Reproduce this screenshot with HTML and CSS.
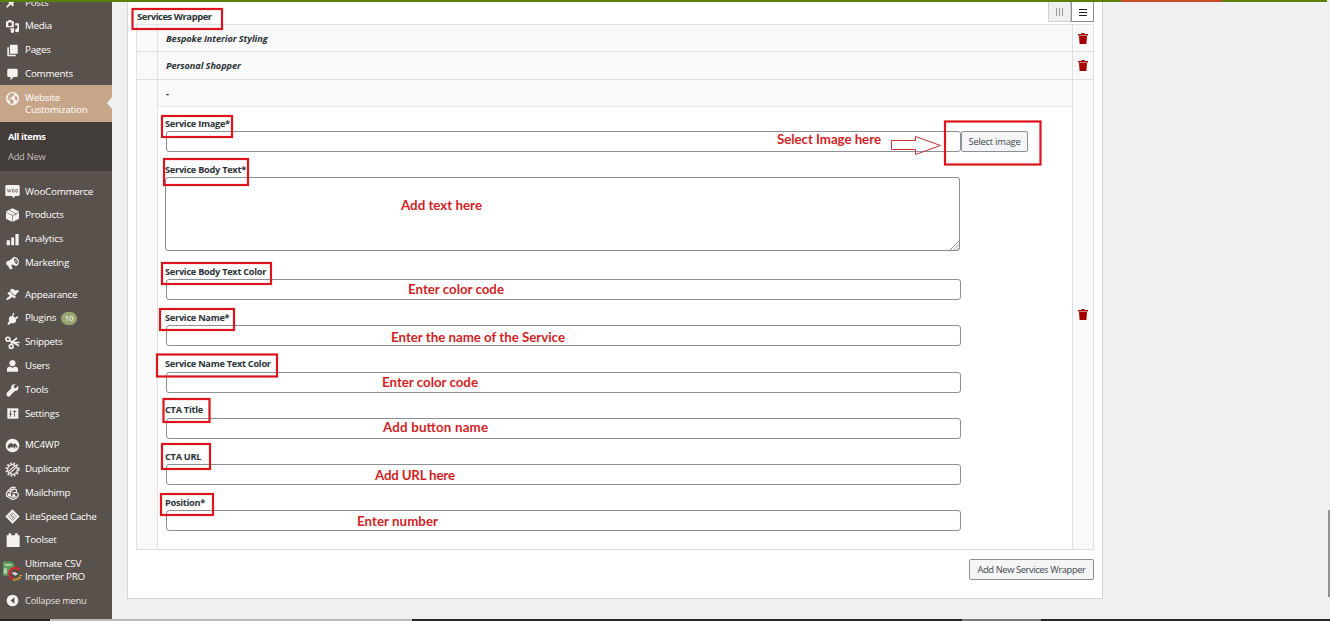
FILE: index.html
```html
<!DOCTYPE html>
<html lang="en">
<head>
<meta charset="utf-8">
<title>Website Customization</title>
<link rel="stylesheet" href="styles.css">
</head>
<body>
<div class="topline"></div>
<div class="shell">
<nav class="sidebar">
  <div class="item"><svg class="ic" viewBox="0 0 20 20"><path d="M18 2l-1 8-3-2-3 3 1 4-2 1-3-3-5 5-2-1 5-6-3-3 1-2 4 1 3-3-2-3z"/></svg><span>Posts</span></div>
  <div class="item"><svg class="ic" viewBox="0 0 20 20"><path fill-rule="evenodd" d="M0 2h3l1-2h4l1 2h3v9H0zM6 3.500a3 3 0 1 0 .1 0zM14 5h6v11a3 3 0 1 1-2.500-3V8H14zM6 12.500h6.500V17a2.700 2.700 0 1 1-2.500-2.500H6z"/></svg><span>Media</span></div>
  <div class="item"><svg class="ic" viewBox="0 0 20 20"><path d="M6 1h12v14H6zM2 5h2.500v11.500H15V19H2z"/></svg><span>Pages</span></div>
  <div class="item"><svg class="ic" viewBox="0 0 20 20"><path d="M4 1h12q2 0 2 2v9q0 2-2 2h-4l-5 5v-5H4q-2 0-2-2V3q0-2 2-2z"/></svg><span>Comments</span></div>
  <div class="item current"><svg class="ic" viewBox="0 0 20 20"><path fill-rule="evenodd" d="M10 0a10 10 0 1 0 .1 0zM8 2l4 0 1 3-3 1-1 3-3 0-1 2 4 0 3 3-1 3-2 2-2-1-1-4-4-4 2-5zM14 6l3 1 1 4-2 3-2-3-1-3z"/></svg><span>Website<br>Customization</span></div>
  <div class="submenu"><div class="sel">All items</div><div>Add New</div></div>
  <div class="item gap"><svg class="ic" viewBox="0 0 20 20"><path d="M1 0h18q2 0 2 2v13q0 2-2 2h-5l-2 3-3-3H1q-2 0-2-2V2q0-2 2-2z"/><path class="line thin" d="M2 6l1.500 5L5 7l1.500 4L8 6M10 7h2.500v4H10zM15 7h2.500v4H15z"/></svg><span>WooCommerce</span></div>
  <div class="item"><svg class="ic" viewBox="0 0 20 20"><path d="M10-1l10 5v11l-10 5-10-5V4z"/><path class="line thin" d="M0 5l10 5 10-5M10 10v10M5 2l10 5v3"/></svg><span>Products</span></div>
  <div class="item"><svg class="ic" viewBox="0 0 20 20"><path d="M1 11h5v8H1zM8 7h4.500v12H8zM14.500 1.500h5V19h-5z"/></svg><span>Analytics</span></div>
  <div class="item"><svg class="ic" viewBox="0 0 20 20"><path fill-rule="evenodd" d="M12 0q7 0 8 7-1 7-5 7l-4-2-3 0 2 6-4 1-3-6q-3 0-3-4 1-3 6-4zM13 2q-2 5 3 9 3-1 2-5-2-4-5-4zM14 5q3 0 2 4-2-1-2-4z"/></svg><span>Marketing</span></div>
  <div class="item gap"><svg class="ic" viewBox="0 0 20 20"><path d="M7 2l3-1 4 3 5-1 1 2-6 6 1 3-2 2-3-2-8 5-2-2 6-5-4-4 2-2 2 0z"/><path class="line" d="M6 5l7 7"/></svg><span>Appearance</span></div>
  <div class="item"><svg class="ic" viewBox="0 0 20 20"><path d="M11 1l2 1-2 4 3 3 4-3 1 2-4 4 1 2q-3 5-8 3l-4 3-2-2 3-4q-2-5 2-8l2 1z"/></svg><span>Plugins</span><b class="count">10</b></div>
  <div class="item"><svg class="ic" viewBox="0 0 20 20"><g class="stroke"><circle cx="3" cy="5" r="3"/><circle cx="8" cy="16" r="3"/><path d="M5 7l6 3h10M8 13l2-4 7-6M11 10l9 5"/></g></svg><span>Snippets</span></div>
  <div class="item"><svg class="ic" viewBox="0 0 20 20"><path d="M10 0a4.800 4.800 0 1 1-.1 0zM1.500 18v-4q0-3 4-4l4.500 2 4.500-2q4 1 4 4v4z"/></svg><span>Users</span></div>
  <div class="item"><svg class="ic" viewBox="0 0 20 20"><path d="M18 3l-3 3.500-3-1 0-3L15 1q-5-2-7 3v3l-7 7q-1 3 1 5 2 1 4 0l7-8q7 0 6-7z"/></svg><span>Tools</span></div>
  <div class="item"><svg class="ic" viewBox="0 0 20 20"><path d="M2 2h17v16H2z"/><path class="line" d="M7 5v10M5 11h4M13 5v10M11 7h5"/></svg><span>Settings</span></div>
  <div class="item gap"><svg class="ic" viewBox="0 0 20 20"><circle cx="10" cy="10" r="10.500"/><path class="dark" d="M2 12l3-5 4-1 2 3 2-3 4 4 1 4-2-1-2-2 0 4-2-1-1-3-2 3-2-2-2 3z"/></svg><span>MC4WP</span></div>
  <div class="item"><svg class="ic" viewBox="0 0 20 20"><circle class="stroke teeth" cx="10" cy="10" r="9.500"/><circle class="stroke thin" cx="10" cy="10" r="7.500"/><path class="stroke thin" d="M4 13L14 4M6 16L16 6"/></svg><span>Duplicator</span></div>
  <div class="item"><svg class="ic" viewBox="0 0 20 20"><path class="stroke thin" d="M15 1Q9-2 4 5q-5 5-3 9l4 2q4 5 9 2 5-2 5-7l-3-3 0-4-4-1-4 3-2 5 2 4q4 2 8-1M4 8l6-5M10 9l6-1"/><circle cx="5" cy="12" r="2.500"/><circle cx="12" cy="13" r="2.200"/></svg><span>Mailchimp</span></div>
  <div class="item"><svg class="ic" viewBox="0 0 20 20"><path d="M10-1l11 11-11 11L-1 10z"/><path class="line thin" d="M10 4l6 6-6 6-6-6zM10 6l-2 4h4l-2 4"/></svg><span>LiteSpeed Cache</span></div>
  <div class="item"><svg class="ic" viewBox="0 0 20 20"><path d="M1 2h3v-3h4v3h6v-3h4v3h3v18H1z"/></svg><span>Toolset</span></div>
  <div class="item two"><svg class="ic csv" viewBox="0 0 20 20"><path fill="#5b9a5c" d="M0 0h9l3 3v12H0z"/><path fill="#b8d1ac" d="M2 2.500h7v2H2zM1 7h3v6H1z"/><circle cx="12.500" cy="13" r="6" fill="#554d49"/><path fill="none" stroke="#d12c32" stroke-width="2.400" d="M18 9q-4-4-9-1-4 4-1 9 1 1 3 2"/><path fill="none" stroke="#e3a62f" stroke-width="2.300" stroke-dasharray="2 1" d="M11 19q6 1 8-5"/><path fill="#ddd" d="M9 12l3-1 4 2-3 2z"/></svg><span>Ultimate CSV<br>Importer PRO</span></div>
  <div class="item collapse"><svg class="ic" viewBox="0 0 20 20"><circle cx="10" cy="10" r="9"/><path class="dark" d="M13 5v10l-6-5z"/></svg><span>Collapse menu</span></div>
</nav>
<main class="content">
  <section class="panel">
    <header class="head"><h2>Services Wrapper</h2>
      <div class="views"><span class="view off"><i></i><i></i><i></i></span><span class="view on"><i></i><i></i><i></i></span></div>
    </header>
    <div class="rows">
      <div class="row"><div class="grip"></div><div class="title">Bespoke Interior Styling</div><div class="del"><svg viewBox="0 0 10 12"><path d="M0 1h3l1-1h2l1 1h3v1.500H0zM1 3h8l-.6 8H1.600z"/></svg></div></div>
      <div class="row"><div class="grip"></div><div class="title">Personal Shopper</div><div class="del"><svg viewBox="0 0 10 12"><path d="M0 1h3l1-1h2l1 1h3v1.500H0zM1 3h8l-.6 8H1.600z"/></svg></div></div>
      <div class="row open"><div class="grip"></div>
        <div class="body"><div class="title">-</div>
          <div class="fields">
            <div class="field"><label>Service Image*</label><div class="pick"><div class="input"></div><span class="btn">Select image</span></div></div>
            <div class="field area"><label>Service Body Text*</label><div class="input"><svg class="resize" viewBox="0 0 10 10"><path d="M0 10L10 0M4 10l6-6M7.500 10L10 7.500"/></svg></div></div>
            <div class="field"><label>Service Body Text Color</label><div class="input"></div></div>
            <div class="field"><label>Service Name*</label><div class="input"></div></div>
            <div class="field"><label>Service Name Text Color</label><div class="input"></div></div>
            <div class="field"><label>CTA Title</label><div class="input"></div></div>
            <div class="field"><label>CTA URL</label><div class="input"></div></div>
            <div class="field"><label>Position*</label><div class="input"></div></div>
          </div>
        </div>
        <div class="del"><svg viewBox="0 0 10 12"><path d="M0 1h3l1-1h2l1 1h3v1.500H0zM1 3h8l-.6 8H1.600z"/></svg></div></div>
    </div>
    <footer class="foot"><span class="btn add">Add New Services Wrapper</span></footer>
  </section>
</main>
</div>
<svg class="marks" viewBox="0 0 1330 621">
  <g class="boxes">
    <rect x="132.500" y="9" width="89.500" height="20"/><rect x="162" y="116" width="70" height="21"/><rect x="164" y="159" width="84" height="26"/><rect x="162" y="263" width="109" height="21"/><rect x="160" y="309" width="74" height="21"/><rect x="157" y="354.500" width="120" height="22"/><rect x="163.500" y="399" width="46" height="23"/><rect x="162" y="444" width="48" height="25"/><rect x="161" y="494" width="52" height="21"/><rect x="945" y="121.500" width="95.500" height="43"/>
  </g>
  <path class="arrow" d="M891.500 140.500h24v-4l25 9-25 9v-5h-24z"/>
  <g class="notes">
    <text x="777" y="144" textLength="104">Select Image here</text><text x="401" y="210" textLength="81">Add text here</text><text x="408" y="294" textLength="96">Enter color code</text><text x="391" y="342" textLength="174">Enter the name of the Service</text><text x="382" y="387" textLength="96">Enter color code</text><text x="383" y="432" textLength="105">Add button name</text><text x="375" y="479.500" textLength="80">Add URL here</text><text x="357" y="526" textLength="81">Enter number</text>
  </g>
</svg>
<div class="thumb"></div>
<div class="taskbar"><i></i><b></b></div>
</body>
</html>
```
FILE: styles.css
```css
* { box-sizing: border-box; }
body { margin: 0; width: 1330px; height: 621px; overflow: hidden; position: relative; background: #f0f0f0; font-family: "Open Sans", "Noto Sans", sans-serif; color: #2c3338; }
.topline { position: absolute; z-index: 3; left: 0; top: 0; width: 1327px; height: 2px; background: linear-gradient(90deg, #5c7f0a 1121px, #c8482c 1121px 1222px, #5c7f0a 1222px); }
.shell { display: flex; height: 621px; }
.sidebar { width: 112px; background: #59514c; flex: none; margin-top: -10px; height: 631px; font-size: 9.8px; letter-spacing: -0.25px; color: #fff; }
.item { display: flex; align-items: center; height: 23.8px; padding: 2px 0 0 6px; gap: 6px; line-height: 12.6px; white-space: nowrap; }
.item.gap { margin-top: 7.800px; }
.ic { width: 13px; height: 13px; fill: #f4f2f1; flex: none; overflow: visible; }
.line { fill: none; stroke: #59514c; stroke-width: 1.4; }
.line.thin { stroke-width: 0.9; }
.dark { fill: #59514c; }
.stroke { fill: none; stroke: #f4f2f1; stroke-width: 2.500; }
.stroke.thin { stroke-width: 1.700; }
.stroke.teeth { stroke-dasharray: 2.500 2.500; stroke-width: 3; }
.item.current { height: 36.500px; background: #c7a589; position: relative; align-items: flex-start; padding-top: 6.500px; }
.item.current::after { content: ""; position: absolute; right: 0; top: 12px; border: 6.500px solid transparent; border-left: 0; border-right: 5.500px solid #f0f0f0; }
.submenu { background: #433d3a; height: 49.500px; padding: 5.500px 8px; font-size: 9.3px; line-height: 19.6px; color: #c0bcba; }
.sel { color: #fff; font-weight: 700; letter-spacing: -0.35px; }
.count { background: #99a570; border-radius: 7px; font-size: 8px; font-weight: 400; padding: 0 3.500px; letter-spacing: -0.2px; margin-left: -1px; }
.item.two { height: 36.500px; }
.csv { width: 19px; height: 20px; margin: 0 -3px 0 -3px; }
.item.collapse { font-size: 9.4px; color: #e4e1df; }
.content { flex: 1; padding-left: 15px; }
.panel { width: 976px; height: 599px; background: #fff; border: 1px solid #d5d6d8; border-top: 0; padding: 0 8px; }
.head { display: flex; justify-content: space-between; height: 24px; }
h2 { margin: 0; font-size: 9.5px; line-height: 34px; letter-spacing: -0.480px; white-space: nowrap; padding-left: 1px; }
.views { display: flex; height: 22px; }
.view { width: 23px; border: 1px solid #d0d0d0; display: flex; align-items: center; justify-content: center; gap: 2px; padding-top: 2px; background: #f0f0f0; }
.view i { width: 1px; height: 8px; background: #999; }
.view.on { border-color: #8c8f94; background: #fff; flex-direction: column; }
.view.on i { width: 8px; height: 1px; background: #222; }
.rows { border: 1px solid #e2e2e3; border-bottom: 0; }
.row { display: flex; height: 27.300px; background: #f9f9f9; border-bottom: 1px solid #dedfe0; }
.grip { width: 21px; border-right: 1px solid #e2e2e3; flex: none; }
.title { flex: 1; padding-left: 8px; font-size: 9.2px; font-weight: 700; font-style: italic; line-height: 27px; letter-spacing: -0.09px; white-space: nowrap; }
.del { width: 21px; flex: none; border-left: 1px solid #dedfe0; display: flex; align-items: center; justify-content: center; padding-top: 1.500px; }
.del svg { width: 10px; height: 12px; fill: #a50000; }
.row.open { height: 470px; }
.body { flex: 1; background: #fff; }
.body .title { background: #f9f9f9; height: 27px; border-bottom: 1px solid #e7e7e8; }
.fields { padding: 9px 0 0 7px; }
.field { height: 46.200px; }
.field label { display: block; height: 15.500px; line-height: 16.500px; font-size: 9.2px; font-weight: 700; letter-spacing: -0.26px; white-space: nowrap; }
.input { width: 795px; height: 21px; border: 1px solid #8c8f94; border-radius: 3px; background: #fff; margin-left: 1px; }
.area { height: 102px; }
.area .input { height: 74px; margin-left: 0; display: flex; justify-content: flex-end; align-items: flex-end; }
.resize { width: 9px; height: 9px; fill: none; stroke: #888; }
.pick { display: flex; }
.btn { height: 21px; border: 1px solid #8c8f94; border-radius: 2px; background: #f3f5f6; font-size: 9.4px; line-height: 20px; text-align: center; width: 67px; letter-spacing: -0.25px; white-space: nowrap; color: #43484d; }
.foot { display: flex; justify-content: flex-end; padding-top: 9px; }
.btn.add { width: 125px; letter-spacing: -0.42px; }
.marks { position: absolute; left: 0; top: 0; width: 1330px; height: 621px; }
.boxes rect { fill: none; stroke: #dc141c; stroke-width: 2.2; }
.arrow { fill: none; stroke: #c0343a; stroke-width: 1; }
.notes { font: 700 13.3px Lato, sans-serif; fill: #d11f26; }
.thumb { position: absolute; right: 0; top: 510px; width: 2px; height: 87px; background: #929292; }
.taskbar { position: absolute; left: 0; bottom: 0; width: 100%; height: 2px; background: #252525; display: flex; }
.taskbar i { margin-left: 50px; width: 362px; background: #bbb; }
.taskbar b { margin-left: 550px; width: 79px; background: #777; }
```
